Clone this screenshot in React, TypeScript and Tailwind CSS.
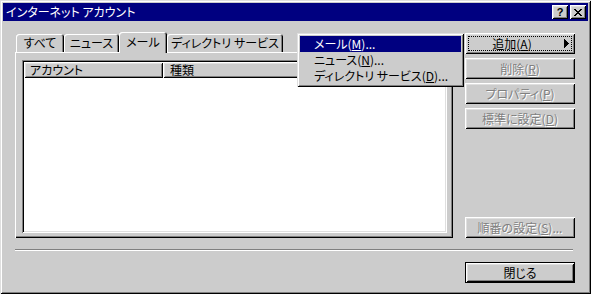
import React from "react";

const FONT = "font-['Noto_Sans_CJK_JP','Noto_Sans',sans-serif] [font-feature-settings:'palt']";
const FACE = "bg-[#cccccc]";
const WINFRAME =
  "shadow-[inset_1px_1px_0_#dfdfdf,inset_-1px_-1px_0_#000,inset_2px_2px_0_#fff,inset_-2px_-2px_0_#808080]";
const RAISED =
  "shadow-[inset_1px_1px_0_#fff,inset_-1px_-1px_0_#000,inset_2px_2px_0_#dfdfdf,inset_-2px_-2px_0_#808080]";
const SUNKEN =
  "shadow-[inset_1px_1px_0_#808080,inset_-1px_-1px_0_#fff,inset_2px_2px_0_#000,inset_-2px_-2px_0_#dfdfdf]";
const DISABLED = "text-[#808080] [text-shadow:1px_1px_0_#fff]";

function Btn({
  children,
  disabled,
  className = "",
}: {
  children: React.ReactNode;
  disabled?: boolean;
  className?: string;
}) {
  return (
    <div
      className={`h-[21px] w-[110px] ${FACE} ${RAISED} flex items-center justify-center ${
        disabled ? DISABLED : "text-black"
      } ${className}`}
    >
      <span className="pt-[1px]">{children}</span>
    </div>
  );
}

function Tab({
  children,
  w,
  selected,
}: {
  children: React.ReactNode;
  w: string;
  selected?: boolean;
}) {
  return (
    <div
      className={`${w} ${FACE} rounded-t-[3px] flex items-center justify-center shadow-[inset_1px_1px_0_#fff,inset_-1px_0_0_#000,inset_-2px_0_0_#808080] ${
        selected ? "relative z-10 h-[21px] translate-y-[1px] pb-[2px]" : "h-[18px]"
      }`}
    >
      {children}
    </div>
  );
}

export default function App() {
  return (
    <div
      className={`${FONT} relative w-[591px] h-[294px] ${FACE} p-[3px] flex flex-col text-[12px] leading-none text-black ${WINFRAME}`}
    >
      {/* title bar */}
      <div className="h-[18px] bg-[#000080] flex items-center pl-[3px] pr-[2px]">
        <span className="text-white text-[12px]">インターネット アカウント</span>
        <div className="ml-auto flex gap-[2px]">
          <div className={`w-[16px] h-[14px] ${FACE} ${RAISED} flex items-center justify-center`}>
            <span className="font-['Liberation_Sans',sans-serif] font-bold text-[11px] leading-none text-black">?</span>
          </div>
          <div className={`w-[16px] h-[14px] ${FACE} ${RAISED} flex items-center justify-center`}>
            <svg width="8" height="7" viewBox="0 0 8 7" shapeRendering="crispEdges">
              <path
                d="M0 0h2v1h-2zM6 0h2v1h-2zM1 1h2v1h-2zM5 1h2v1h-2zM2 2h4v1h-4zM3 3h2v1h-2zM2 4h4v1h-4zM1 5h2v1h-2zM5 5h2v1h-2zM0 6h2v1h-2zM6 6h2v1h-2z"
                fill="#000"
              />
            </svg>
          </div>
        </div>
      </div>

      {/* body */}
      <div className="flex flex-col pl-[12px] pt-[11px]">
        <div className="flex gap-[12px]">
          {/* left: tabs + panel */}
          <div className="w-[438px] flex flex-col">
            <div className="h-[20px] flex items-end pl-[1px]">
              <Tab w="w-[48px]">すべて</Tab>
              <Tab w="w-[55px]">ニュース</Tab>
              <Tab w="w-[48px]" selected>
                メール
              </Tab>
              <Tab w="w-[116px]">ディレクトリ サービス</Tab>
            </div>
            <div
              className={`h-[186px] pt-[8px] pl-[7px] pr-[6px] pb-[5px] shadow-[inset_1px_1px_0_#fff,inset_-1px_-1px_0_#000,inset_-2px_-2px_0_#808080]`}
            >
              <div className={`w-full h-full bg-white p-[2px] ${SUNKEN} flex flex-col`}>
                <div className="h-[16px] flex">
                  <div className={`w-[139px] h-full ${FACE} ${RAISED} flex items-center pl-[6px]`}>
                    アカウント
                  </div>
                  <div className={`flex-1 h-full ${FACE} ${RAISED} flex items-center pl-[7px]`}>
                    種類
                  </div>
                </div>
              </div>
            </div>
          </div>

          {/* right: buttons */}
          <div className="w-[110px] flex flex-col gap-[4px] pt-[1px]">
            <div className={`relative h-[21px] w-[110px] ${FACE} ${RAISED} flex items-center`}>
              <div className="absolute left-[3px] top-[3px] right-[3px] bottom-[3px] border border-dotted border-black" />
              <span className="w-[94px] text-center pt-[1px]">
                追加(<u>A</u>)
              </span>
              <svg
                className="absolute right-[6px] top-[6px]"
                width="5"
                height="9"
                viewBox="0 0 5 9"
                shapeRendering="crispEdges"
              >
                <path d="M0 0v9h1v-9zM1 1v7h1v-7zM2 2v5h1v-5zM3 3v3h1v-3zM4 4v1h1v-1z" fill="#000" />
              </svg>
            </div>
            <Btn disabled>
              削除(<u>R</u>)
            </Btn>
            <Btn disabled>
              プロパティ(<u>P</u>)
            </Btn>
            <Btn disabled>
              標準に設定(<u>D</u>)
            </Btn>
            <Btn disabled className="mt-auto">
              順番の設定(<u>S</u>)...
            </Btn>
          </div>
        </div>

        {/* separator */}
        <div className="mt-[11px] w-[558px] h-[2px] border-t border-t-[#808080] border-b border-b-white" />

        {/* close */}
        <div className="mt-[11px] w-[560px] flex justify-end">
          <div className="w-[110px] h-[21px] border border-black">
            <div className={`w-full h-full ${FACE} ${RAISED} flex items-center justify-center`}>
              <span className="pt-[1px]">閉じる</span>
            </div>
          </div>
        </div>
      </div>

      {/* popup menu */}
      <div
        className={`absolute left-[297px] top-[33px] w-[167px] p-[3px] ${FACE} ${WINFRAME} flex flex-col z-20`}
      >
        <div className="h-[16px] bg-[#000080] text-white flex items-center pl-[14px]">
          メール(<u>M</u>)...
        </div>
        <div className="h-[16px] flex items-center pl-[14px]">
          ニュース(<u>N</u>)...
        </div>
        <div className="h-[16px] flex items-center pl-[14px]">
          ディレクトリ サービス(<u>D</u>)...
        </div>
      </div>
    </div>
  );
}
